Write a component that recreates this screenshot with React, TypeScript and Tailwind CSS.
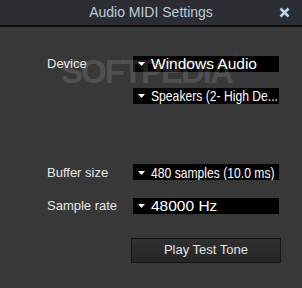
import React from 'react';

const Combo = ({ text, big }: { text: string; big?: boolean }) => (
  <div className="flex h-4 w-[146px] items-center overflow-hidden bg-black pl-[5px] text-white">
    <svg width="7" height="4" viewBox="0 0 7 4" className="mt-[1px] shrink-0">
      <path d="M0 0h7L3.5 4z" fill="#fff" />
    </svg>
    {big ? (
      <span className="ml-[6px] whitespace-nowrap text-[15.5px] leading-none">{text}</span>
    ) : (
      <span className="ml-[6px] origin-left scale-x-[0.81] whitespace-nowrap text-[15px] leading-none">
        {text}
      </span>
    )}
  </div>
);

const Row = ({ label, children }: { label?: string; children: React.ReactNode }) => (
  <div className="flex items-center">
    <div className="w-[86px] text-[13px] text-[#e6e6e6]">{label}</div>
    {children}
  </div>
);

const App = () => {
  return (
    <div className="relative h-[288px] w-[302px] overflow-hidden bg-[#383838] font-['Liberation_Sans',sans-serif]">
      {/* Title bar */}
      <div className="relative flex h-[27px] items-center justify-center border-b-2 border-[#0c0c0c] bg-[#2b2d32]">
        <span className="text-[14px] text-[#bccbdc]">Audio MIDI Settings</span>
        <div className="absolute right-[10px] top-[5px] flex h-[15px] w-[15px] items-center justify-center bg-[#22303f]">
          <svg width="11" height="11" viewBox="0 0 11 11">
            <path d="M1.5 1.5l8 8M9.5 1.5l-8 8" stroke="#c3d2e2" strokeWidth="2.6" />
          </svg>
        </div>
      </div>

      {/* Settings */}
      <div className="flex flex-col pl-[47px] pt-[27px]">
        <Row label="Device">
          <Combo text="Windows Audio" big />
        </Row>
        <div className="mt-[14px]">
          <Row>
            <Combo text="Speakers (2- High De..." />
          </Row>
        </div>
        <div className="mt-[59px]">
          <Row label="Buffer size">
            <Combo text="480 samples (10.0 ms)" />
          </Row>
        </div>
        <div className="mt-[14px]">
          <Row label="Sample rate">
            <Combo text="48000 Hz" big />
          </Row>
        </div>
        <div className="ml-[84px] mt-[22px]">
          <button className="flex h-[25px] w-[150px] items-center justify-center border border-[#161616] bg-gradient-to-b from-[#2f2f2f] to-[#252525] text-[13px] text-[#e2e2e2]">
            Play Test Tone
          </button>
        </div>
      </div>

      {/* Watermark */}
      <div className="pointer-events-none absolute left-[61px] top-[47px] flex items-start text-white/15">
        <span className="text-[33px] font-bold tracking-[-2px]">SOFTPEDIA</span>
        <span className="ml-[1px] mt-[4px] text-[8px]">®</span>
      </div>
    </div>
  );
};

export default App;
